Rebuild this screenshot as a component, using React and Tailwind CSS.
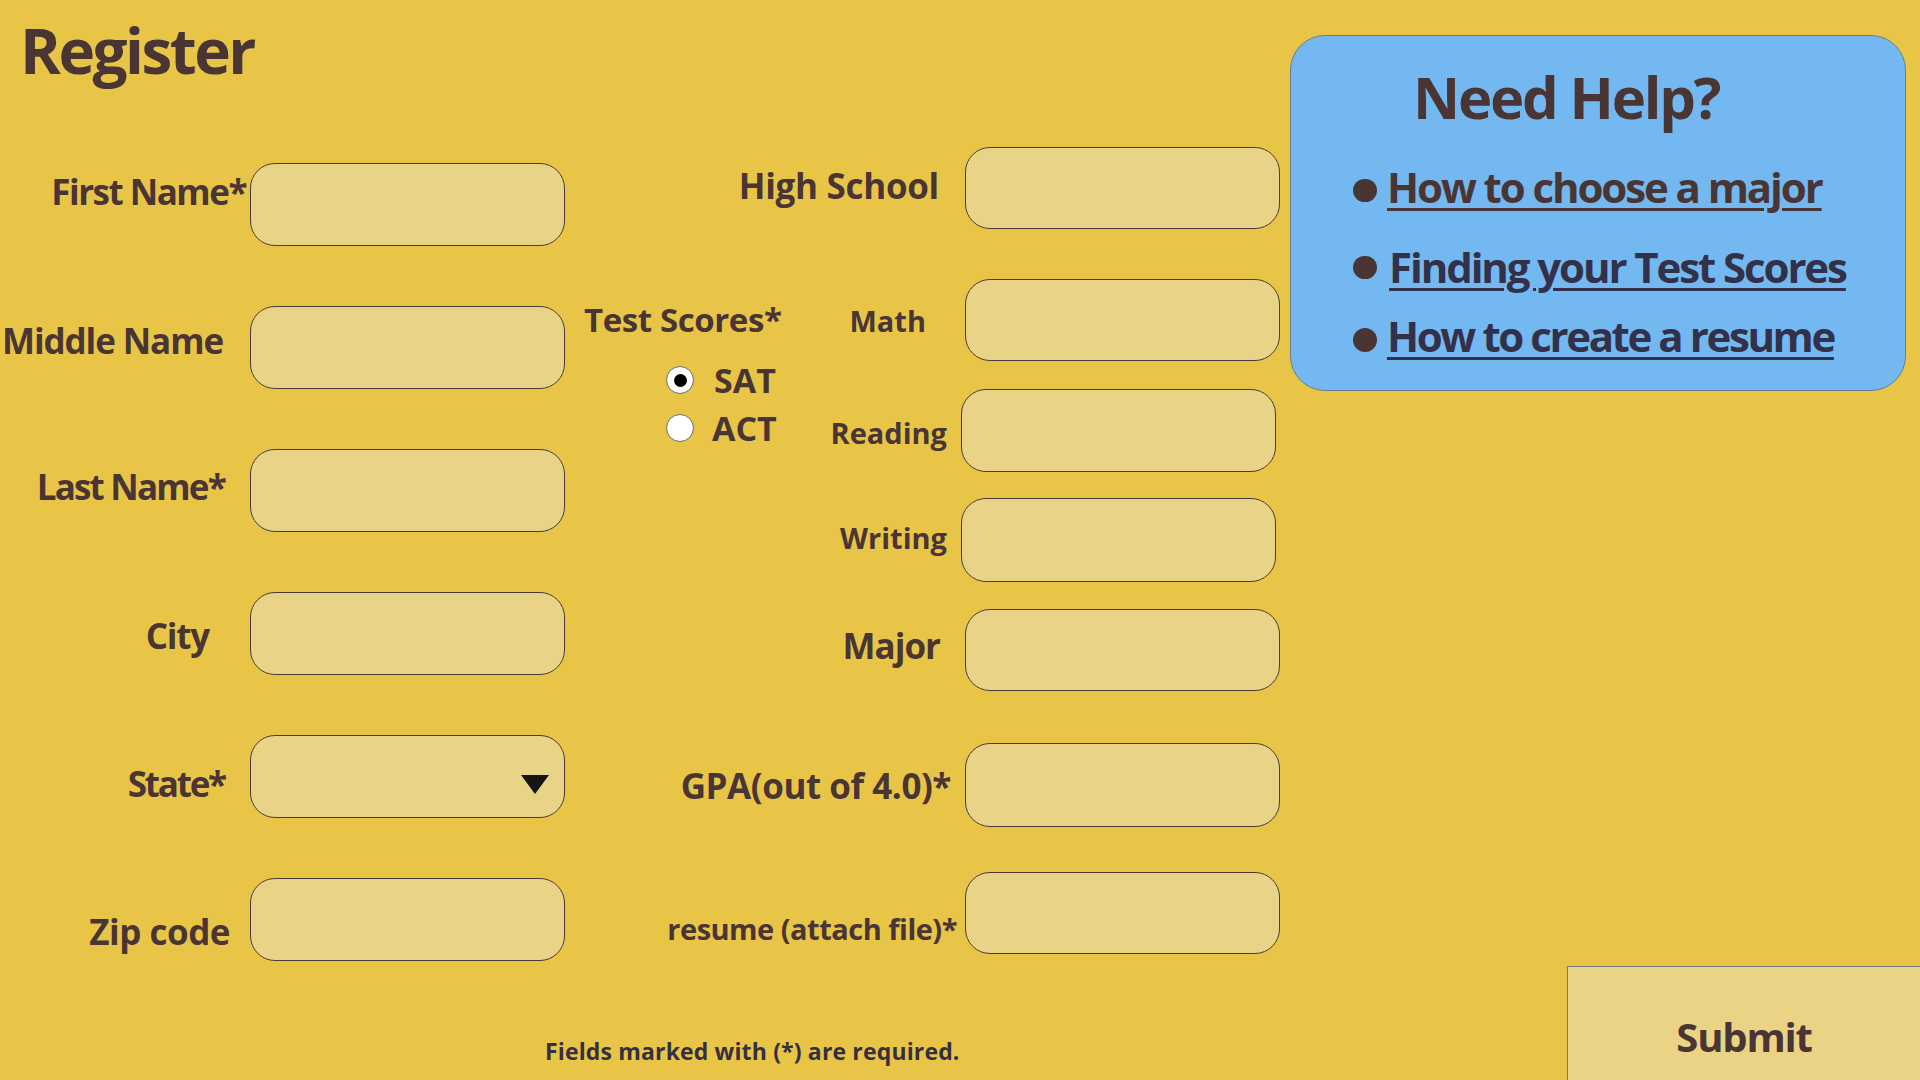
import React from "react";

function Box({ className = "", children }) {
  return (
    <div
      className={
        "w-[315px] rounded-[25px] border border-[#4a3a3a] bg-[#e9d386] shrink-0 " +
        className
      }
    >
      {children}
    </div>
  );
}

function LeftRow({ label, labelClass, children }) {
  return (
    <div className="flex items-center h-[83px]">
      <div className={"w-[250px] text-right text-[35px] leading-none whitespace-nowrap " + labelClass}>
        {label}
      </div>
      <Box className="h-[83px]">{children}</Box>
    </div>
  );
}

export default function App() {
  return (
    <div className="w-[1920px] h-[1080px] bg-[#e9c547] overflow-hidden flex font-['Open_Sans',sans-serif] font-bold text-[#4a3535]">
      {/* left + middle */}
      <div className="w-[1280px] flex flex-col shrink-0">
        <div className="flex">
          {/* left column */}
          <div className="w-[565px] flex flex-col shrink-0">
            <h1 className="pt-[19px] pl-[20px] text-[62px] leading-none tracking-[-2.5px]">Register</h1>
            <div className="mt-[82px] flex flex-col gap-[60px]">
              <LeftRow label="First Name*" labelClass="pr-[4px] pb-[26px] tracking-[-1.5px]" />
              <LeftRow label="Middle Name" labelClass="pr-[27px] pb-[14px] tracking-[-1.1px]" />
              <LeftRow label="Last Name*" labelClass="pr-[25px] pb-[8px] tracking-[-1.8px]" />
              <LeftRow label="City" labelClass="pr-[41px] pt-[4px] tracking-[-1.2px]" />
              <LeftRow label="State*" labelClass="pr-[25px] pt-[14px] tracking-[-2.2px]">
                <div className="h-full flex items-center justify-end pr-[15px] pt-[16px]">
                  <svg width="28" height="19" viewBox="0 0 28 19">
                    <polygon points="0,0 28,0 14,19" fill="#151515" />
                  </svg>
                </div>
              </LeftRow>
              <LeftRow label="Zip code" labelClass="pr-[20px] pt-[24px] tracking-[-0.5px]" />
            </div>
          </div>

          {/* middle column */}
          <div className="w-[715px] flex flex-col shrink-0">
            <div className="mt-[147px] h-[82px] flex justify-end items-center">
              <span className="text-[35px] leading-none pb-[6px] whitespace-nowrap tracking-[-0.3px]">High School</span>
              <Box className="ml-[26px] h-[82px]" />
            </div>

            <div className="mt-[50px] flex">
              <div className="pl-[19px] pt-[24px] flex flex-col shrink-0">
                <div className="text-[33px] leading-none whitespace-nowrap tracking-[-0.4px]">Test Scores*</div>
                <div className="mt-[30px] pl-[82px] flex items-center gap-[20px] h-[28px]">
                  <div className="w-[28px] h-[28px] rounded-full bg-white border border-[#6a6a6a] flex items-center justify-center">
                    <div className="w-[13px] h-[13px] rounded-full bg-black" />
                  </div>
                  <span className="text-[34px] leading-none">SAT</span>
                </div>
                <div className="mt-[20px] pl-[82px] flex items-center gap-[18px] h-[28px]">
                  <div className="w-[28px] h-[28px] rounded-full bg-white border border-[#6a6a6a]" />
                  <span className="text-[34px] leading-none">ACT</span>
                </div>
              </div>
              <div className="flex-1 flex flex-col">
                <div className="h-[82px] flex justify-end items-center">
                  <span className="text-[29px] leading-none whitespace-nowrap">Math</span>
                  <Box className="ml-[39px] h-[82px]" />
                </div>
                <div className="mt-[28px] h-[83px] pr-[4px] flex justify-end items-center">
                  <span className="text-[29px] leading-none pt-[4px] whitespace-nowrap">Reading</span>
                  <Box className="ml-[14px] h-[83px]" />
                </div>
                <div className="mt-[26px] h-[84px] pr-[4px] flex justify-end items-center">
                  <span className="text-[29px] leading-none pb-[6px] whitespace-nowrap">Writing</span>
                  <Box className="ml-[14px] h-[84px]" />
                </div>
              </div>
            </div>

            <div className="mt-[27px] h-[82px] flex justify-end items-center">
              <span className="text-[35px] leading-none pb-[10px] whitespace-nowrap tracking-[-1px]">Major</span>
              <Box className="ml-[25px] h-[82px]" />
            </div>
            <div className="mt-[52px] h-[84px] flex justify-end items-center">
              <span className="text-[35px] leading-none whitespace-nowrap tracking-[-0.45px]">GPA(out of 4.0)*</span>
              <Box className="ml-[14px] h-[84px]" />
            </div>
            <div className="mt-[45px] h-[82px] flex justify-end items-center">
              <span className="text-[29px] leading-none pt-[30px] whitespace-nowrap tracking-[-0.5px]">resume (attach file)*</span>
              <Box className="ml-[8px] h-[82px]" />
            </div>
          </div>
        </div>

        <div className="mt-[79px] pl-[545px] text-[23px] leading-none text-[#352f40] whitespace-nowrap tracking-[0.15px]">
          Fields marked with (*) are required.
        </div>
      </div>

      {/* right column */}
      <div className="w-[640px] flex flex-col shrink-0">
        <div className="ml-[10px] mt-[35px] w-[616px] h-[356px] rounded-[35px] border border-[#6b7d8f] bg-[#73b8f0] shrink-0 flex flex-col">
          <h2 className="pt-[32px] pl-[122px] text-[58px] leading-none whitespace-nowrap tracking-[-2.2px]">Need Help?</h2>
          <ul className="pl-[62px] flex flex-col">
            <li className="mt-[40px] flex items-center gap-[10px] h-[42px]">
              <span className="w-[24px] h-[23px] rounded-full bg-[#4a3535] mt-[6px] shrink-0" />
              <a className="text-[42px] leading-none underline decoration-[3px] underline-offset-[5px] text-[#4a3535] whitespace-nowrap tracking-[-2.1px]">
                How to choose a major
              </a>
            </li>
            <li className="mt-[38px] flex items-center gap-[12px] h-[42px]">
              <span className="w-[24px] h-[23px] rounded-full bg-[#4a3535] shrink-0" />
              <a className="text-[42px] leading-none underline decoration-[3px] underline-offset-[5px] text-[#33304a] whitespace-nowrap tracking-[-2.1px]">
                Finding your Test Scores
              </a>
            </li>
            <li className="mt-[27px] flex items-center gap-[10px] h-[42px]">
              <span className="w-[24px] h-[24px] rounded-full bg-[#4a3535] mt-[8px] shrink-0" />
              <a className="text-[42px] leading-none underline decoration-[3px] underline-offset-[5px] text-[#33304a] whitespace-nowrap tracking-[-2.4px]">
                How to create a resume
              </a>
            </li>
          </ul>
        </div>
        <button className="ml-[287px] mt-[575px] w-[354px] h-[141px] shrink-0 border border-[#777777] bg-[#ead385] flex items-center justify-center text-[40px] leading-none font-bold text-[#4a3535] tracking-[-1.2px]">
          Submit
        </button>
      </div>
    </div>
  );
}
